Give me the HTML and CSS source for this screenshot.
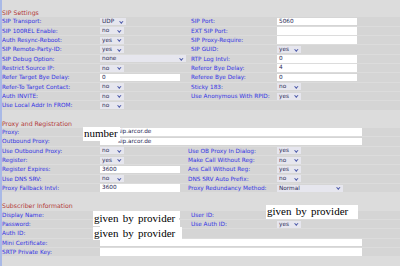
FILE: index.html
```html
<!DOCTYPE html>
<html lang="en">
<head>
    <meta charset="UTF-8">
    <title>SIP</title>
    <link rel="stylesheet" href="styles.css">
</head>
<body>
<div class="page">
    <div class="sect">SIP Settings</div>
    <div class="grid">
        <div class="lbl">SIP Transport:</div><div class="val"><span class="sel w26">UDP</span></div>
        <div class="lbl">SIP Port:</div><div class="val"><span class="txt">5060</span></div><div class="pad"></div>

        <div class="lbl">SIP 100REL Enable:</div><div class="val"><span class="sel">no</span></div>
        <div class="lbl">EXT SIP Port:</div><div class="val"><span class="txt"></span></div><div class="pad"></div>

        <div class="lbl">Auth Resync-Reboot:</div><div class="val"><span class="sel">yes</span></div>
        <div class="lbl">SIP Proxy-Require:</div><div class="val"><span class="txt"></span></div><div class="pad"></div>

        <div class="lbl">SIP Remote-Party-ID:</div><div class="val"><span class="sel">yes</span></div>
        <div class="lbl">SIP GUID:</div><div class="val"><span class="sel">yes</span></div><div class="pad"></div>

        <div class="lbl">SIP Debug Option:</div><div class="val"><span class="sel w86">none</span></div>
        <div class="lbl">RTP Log Intvl:</div><div class="val"><span class="txt">0</span></div><div class="pad"></div>

        <div class="lbl">Restrict Source IP:</div><div class="val"><span class="sel">no</span></div>
        <div class="lbl">Referor Bye Delay:</div><div class="val"><span class="txt">4</span></div><div class="pad"></div>

        <div class="lbl">Refer Target Bye Delay:</div><div class="val"><span class="txt">0</span></div>
        <div class="lbl">Referee Bye Delay:</div><div class="val"><span class="txt">0</span></div><div class="pad"></div>

        <div class="lbl">Refer-To Target Contact:</div><div class="val"><span class="sel">no</span></div>
        <div class="lbl">Sticky 183:</div><div class="val"><span class="sel">no</span></div><div class="pad"></div>

        <div class="lbl">Auth INVITE:</div><div class="val"><span class="sel">no</span></div>
        <div class="lbl">Use Anonymous With RPID:</div><div class="val"><span class="sel">yes</span></div><div class="pad"></div>

        <div class="lbl">Use Local Addr In FROM:</div><div class="val"><span class="sel">no</span></div>
        <div class="lbl"></div><div class="val"></div><div class="pad"></div>
    </div>

    <div class="gap"></div>
    <div class="sect">Proxy and Registration</div>
    <div class="grid">
        <div class="lbl">Proxy:</div><div class="val span3"><span class="txt wide">sip.arcor.de</span></div><div class="pad"></div>

        <div class="lbl">Outbound Proxy:</div><div class="val span3"><span class="txt wide">sip.arcor.de</span></div><div class="pad"></div>

        <div class="lbl">Use Outbound Proxy:</div><div class="val"><span class="sel">no</span></div>
        <div class="lbl">Use OB Proxy In Dialog:</div><div class="val"><span class="sel">yes</span></div><div class="pad"></div>

        <div class="lbl">Register:</div><div class="val"><span class="sel">yes</span></div>
        <div class="lbl">Make Call Without Reg:</div><div class="val"><span class="sel">no</span></div><div class="pad"></div>

        <div class="lbl">Register Expires:</div><div class="val"><span class="txt">3600</span></div>
        <div class="lbl">Ans Call Without Reg:</div><div class="val"><span class="sel">yes</span></div><div class="pad"></div>

        <div class="lbl">Use DNS SRV:</div><div class="val"><span class="sel">no</span></div>
        <div class="lbl">DNS SRV Auto Prefix:</div><div class="val"><span class="sel">no</span></div><div class="pad"></div>

        <div class="lbl">Proxy Fallback Intvl:</div><div class="val"><span class="txt">3600</span></div>
        <div class="lbl">Proxy Redundancy Method:</div><div class="val"><span class="sel w66">Normal</span></div><div class="pad"></div>
    </div>

    <div class="gap"></div>
    <div class="sect">Subscriber Information</div>
    <div class="grid">
        <div class="lbl">Display Name:</div><div class="val"><span class="txt"></span></div>
        <div class="lbl">User ID:</div><div class="val"><span class="txt"></span></div><div class="pad"></div>

        <div class="lbl">Password:</div><div class="val"><span class="txt"></span></div>
        <div class="lbl">Use Auth ID:</div><div class="val"><span class="sel">yes</span></div><div class="pad"></div>

        <div class="lbl">Auth ID:</div><div class="val"><span class="txt"></span></div>
        <div class="lbl"></div><div class="val"></div><div class="pad"></div>

        <div class="lbl">Mini Certificate:</div><div class="val span3"><span class="txt wide"></span></div><div class="pad"></div>

        <div class="lbl">SRTP Private Key:</div><div class="val span3"><span class="txt wide"></span></div><div class="pad"></div>
    </div>
</div>

<div class="mask mask-number">number</div>
<div class="mask mask-name">given by provider</div>
<div class="mask mask-auth">given by provider</div>
<div class="mask mask-user">given by provider</div>
</body>
</html>
```

FILE: styles.css
```css
body {
    margin: 0;
    background: #dcdcdc;
    font-family: "DejaVu Sans", Verdana, sans-serif;
}

.page {
    height: 266px;
    box-sizing: border-box;
    border-left: 2px solid #a9b9e6;
    padding-top: 8px;
}

.sect {
    height: 9.33px;
    line-height: 9.33px;
    font-size: 6.2px;
    color: #b23838;
}

.gap {
    height: 8px;
}

.grid {
    display: grid;
    grid-template-columns: 97px 89px 88px 87px 1fr;
    grid-auto-rows: 8.33px;
    row-gap: 1px;
    margin-bottom: 1px;
}

.lbl {
    background: #d5d5d5;
    color: #3434e4;
    font-size: 5.75px;
    line-height: 8.33px;
    white-space: nowrap;
    overflow: hidden;
}

.grid .lbl:nth-child(5n+3) {
    padding-left: 3px;
}

.val {
    background: #d5d5d5;
    display: flex;
    align-items: center;
    padding-left: 1px;
}

.span3 {
    grid-column: span 3;
}

.pad {
    background: #d5d5d5;
}

.sel {
    position: relative;
    box-sizing: border-box;
    width: 24px;
    height: 7px;
    padding-left: 2px;
    background: #e6e6ee;
    color: #2a2a55;
    font-size: 5.75px;
    line-height: 7px;
}

.sel::after {
    content: "";
    position: absolute;
    right: 3px;
    top: 1.6px;
    width: 1.6px;
    height: 1.6px;
    border-right: 0.8px solid #4a58a8;
    border-bottom: 0.8px solid #4a58a8;
    transform: rotate(45deg);
}

.w26 { width: 26px; }
.w66 { width: 66px; }
.w86 { width: 86px; }

.txt {
    box-sizing: border-box;
    width: 80px;
    height: 7.5px;
    padding-left: 2px;
    background: #fff;
    color: #2a2a55;
    font-size: 5.75px;
    line-height: 7.5px;
}

.txt.wide {
    width: 262px;
    padding-left: 18px;
}

.mask {
    position: absolute;
    background: #fff;
    color: #000;
    font-family: "Liberation Serif", "Times New Roman", serif;
    font-size: 11px;
    word-spacing: 1.5px;
    white-space: nowrap;
    box-sizing: border-box;
    padding-left: 1px;
}

.mask-number { left: 83px; top: 127px; width: 37px; height: 14px; line-height: 13px; }
.mask-name { left: 93px; top: 211px; width: 86px; height: 15px; line-height: 14px; }
.mask-auth { left: 93px; top: 227px; width: 89px; height: 13px; line-height: 12px; }
.mask-user { left: 266px; top: 205px; width: 92px; height: 14px; line-height: 13px; }
```
